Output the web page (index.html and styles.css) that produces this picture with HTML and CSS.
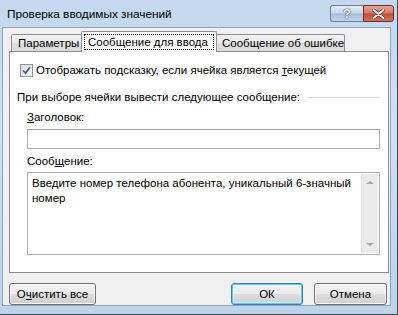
FILE: index.html
```
<!DOCTYPE html>
<html lang="ru">
<head>
    <meta charset="UTF-8">
    <title>Проверка вводимых значений</title>
    <link rel="stylesheet" href="styles.css">
</head>
<body>
    <div class="window">
        <div class="titlebar">
            <span class="title">Проверка вводимых значений</span>
            <div class="caption-buttons">
                <div class="cap-btn help">?</div>
                <div class="cap-btn close">
                    <svg width="13" height="10" viewBox="0 0 13 10">
                        <path d="M1.5 1 L11.5 9 M11.5 1 L1.5 9" stroke="#5a2a2a" stroke-width="3.4" stroke-linecap="round"/>
                        <path d="M1.5 1 L11.5 9 M11.5 1 L1.5 9" stroke="#fff" stroke-width="2" stroke-linecap="round"/>
                    </svg>
                </div>
            </div>
        </div>

        <div class="client">
            <div class="tabs">
                <div class="tab">Параметры</div>
                <div class="tab active"><span class="focus">Сообщение для ввода</span></div>
                <div class="tab">Сообщение об ошибке</div>
            </div>

            <div class="panel">
                <label class="check-row">
                    <span class="checkbox">
                        <svg width="9" height="9" viewBox="0 0 9 9">
                            <path d="M1 4.5 L3.5 7.2 L8 1.2" fill="none" stroke="#4a5f97" stroke-width="1.8"/>
                        </svg>
                    </span>
                    <span>Отображать подсказку, если ячейка является <u>т</u>екущей</span>
                </label>

                <div class="group-title">
                    <span>При выборе ячейки вывести следующее сообщение:</span>
                    <span class="line"></span>
                </div>

                <div class="field">
                    <div class="field-label"><u>З</u>аголовок:</div>
                    <div class="input"></div>
                </div>

                <div class="field">
                    <div class="field-label">Сооб<u>щ</u>ение:</div>
                    <div class="textarea">
                        <div class="text">Введите номер телефона абонента, уникальный 6&#8209;значный номер</div>
                        <div class="scrollbar">
                            <span class="arrow up"></span>
                            <span class="arrow down"></span>
                        </div>
                    </div>
                </div>
            </div>

            <div class="buttons">
                <button class="btn">О<u>ч</u>истить все</button>
                <div class="right">
                    <button class="btn default">ОК</button>
                    <button class="btn">Отмена</button>
                </div>
            </div>
        </div>
    </div>
</body>
</html>
```

FILE: styles.css
```
* {
    margin: 0;
    padding: 0;
    box-sizing: border-box;
}

body {
    width: 398px;
    height: 315px;
    overflow: hidden;
    font-family: "Liberation Sans", Arial, sans-serif;
    font-size: 11.5px;
    color: #000;
}

u {
    text-decoration: underline;
    text-underline-offset: 1px;
}

/* Window frame */
.window {
    width: 398px;
    height: 315px;
    display: flex;
    flex-direction: column;
    border: 1px solid #3f4752;
    border-left: none;
    border-top: none;
    background: linear-gradient(180deg, #c3d8ee 0%, #cfe0f2 40%, #bcd3ea 100%);
}

.titlebar {
    height: 28px;
    display: flex;
    align-items: flex-start;
    justify-content: space-between;
    padding-left: 7px;
}

.title {
    margin-top: 7px;
    font-size: 11.8px;
    color: #000;
}

.caption-buttons {
    display: flex;
    margin-top: 5px;
    margin-right: 3px;
}

.cap-btn {
    height: 17px;
    display: flex;
    align-items: center;
    justify-content: center;
    border: 1px solid #6d7e95;
}

.help {
    width: 33px;
    border-radius: 3px 0 0 3px;
    border-right: none;
    background: linear-gradient(180deg, #e2ecf7 0%, #c5d6ea 48%, #a9bfdb 52%, #bcd1e9 100%);
    color: #fff;
    font-weight: bold;
    font-size: 13px;
    text-shadow: 0 0 2px #40556f, 0 0 1px #40556f;
}

.close {
    width: 31px;
    border-radius: 0 3px 3px 0;
    border-color: #6e2b2b;
    background: linear-gradient(180deg, #e5a795 0%, #d27865 48%, #c04a36 52%, #d27560 100%);
}

/* Client area */
.client {
    flex: 1;
    margin: 0 6px 8px 2px;
    border: 1px solid #8ea3bd;
    background: #f0f0f0;
    display: flex;
    flex-direction: column;
    padding: 2px 2px 0 6px;
}

.tabs {
    display: flex;
    align-items: flex-end;
    height: 21px;
    padding-left: 2px;
    position: relative;
    z-index: 1;
}

.tab {
    height: 17px;
    padding: 0 6px;
    border: 1px solid #8c8e94;
    border-bottom: none;
    border-radius: 2px 2px 0 0;
    background: linear-gradient(180deg, #f3f3f3 0%, #ebebeb 48%, #dedede 52%, #d9d9d9 100%);
    line-height: 16px;
    margin-right: -1px;
    white-space: nowrap;
}

.tab:first-child {
    width: 73px;
}

.tab:last-child {
    width: 130px;
}

.tab.active {
    height: 21px;
    width: 136px;
    margin: 0 -2px -1px -2px;
    padding: 2px 2px 0 2px;
    background: #fff;
    position: relative;
    z-index: 2;
    line-height: 14px;
}

.focus {
    display: block;
    border: 1px dotted #000;
    padding: 0 3px;
}

.panel {
    height: 222px;
    width: 380px;
    border: 1px solid #898c95;
    background: #fff;
    padding: 11px 7px 0 7px;
}

.check-row {
    display: flex;
    align-items: center;
    height: 14px;
    padding-left: 3px;
}

.checkbox {
    width: 13px;
    height: 13px;
    border: 1px solid #8f8f8f;
    background: linear-gradient(135deg, #dcdcdc, #fafafa);
    margin-right: 3px;
    display: flex;
    align-items: center;
    justify-content: center;
}

.group-title {
    display: flex;
    align-items: center;
    margin-top: 13px;
    height: 14px;
}

.group-title .line {
    flex: 1;
    height: 1px;
    background: #dcdfe3;
    margin-left: 7px;
    margin-right: 1px;
}

.field {
    padding-left: 10px;
    padding-right: 1px;
}

.field-label {
    margin-top: 6px;
    height: 14px;
    line-height: 14px;
}

.input {
    margin-top: 5px;
    height: 20px;
    border: 1px solid #abadb3;
    border-top-color: #9a9ca3;
    background: #fff;
}

.field + .field .field-label {
    margin-top: 5px;
}

.textarea {
    margin-top: 4px;
    height: 83px;
    border: 1px solid #abadb3;
    display: flex;
    padding: 1px;
}

.text {
    flex: 1;
    padding: 2px 2px 0 3px;
    line-height: 15px;
}

.scrollbar {
    width: 17px;
    background: #eaeaea;
    border-left: 1px solid #e0e0e0;
    display: flex;
    flex-direction: column;
    justify-content: space-between;
    align-items: center;
    padding: 7px 0 7px;
}

.arrow {
    width: 0;
    height: 0;
    border-left: 4px solid transparent;
    border-right: 4px solid transparent;
}

.arrow.up {
    border-bottom: 3px solid #a8a8a8;
}

.arrow.down {
    border-top: 3px solid #a8a8a8;
}

/* Buttons */
.buttons {
    display: flex;
    justify-content: space-between;
    margin-top: 10px;
}

.right {
    display: flex;
    gap: 11px;
    margin-right: 1px;
}

.btn {
    height: 22px;
    font-family: inherit;
    font-size: 11.5px;
    color: #000;
    border: 1px solid #707070;
    border-radius: 3px;
    background: linear-gradient(180deg, #f2f2f2 0%, #ebebeb 48%, #dddddd 52%, #cfcfcf 100%);
    box-shadow: inset 0 0 0 1px rgba(255, 255, 255, 0.8);
    width: 73px;
}

.btn:first-child {
    width: 87px;
}

.btn.default {
    width: 72px;
    border-color: #3c7fb1;
    box-shadow: inset 0 0 0 1px #48d2fb, inset 0 0 0 2px rgba(255, 255, 255, 0.4);
}
```
